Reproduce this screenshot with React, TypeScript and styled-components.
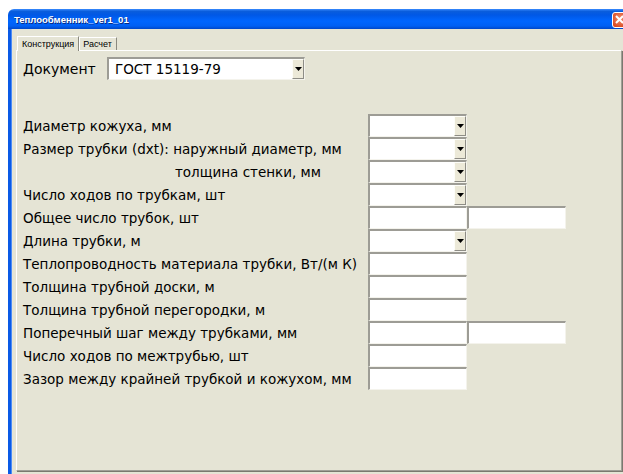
import React from "react";
import styled, { createGlobalStyle } from "styled-components";

const GlobalStyle = createGlobalStyle`
  html, body {
    margin: 0;
    padding: 0;
    background: #ffffff;
    overflow: hidden;
  }
  body {
    width: 623px;
    height: 474px;
  }
`;

type Field = {
  label: string;
  indent?: number;
  kind: "combo" | "text" | "pair";
};

const fields: Field[] = [
  { label: "Диаметр кожуха, мм", kind: "combo" },
  { label: "Размер трубки (dxt): наружный диаметр, мм", kind: "combo" },
  { label: "толщина стенки, мм", indent: 152, kind: "combo" },
  { label: "Число ходов по трубкам, шт", kind: "combo" },
  { label: "Общее число трубок, шт", kind: "pair" },
  { label: "Длина трубки, м", kind: "combo" },
  { label: "Теплопроводность материала трубки, Вт/(м К)", kind: "text" },
  { label: "Толщина трубной доски, м", kind: "text" },
  { label: "Толщина трубной перегородки, м", kind: "text" },
  { label: "Поперечный шаг между трубками, мм", kind: "pair" },
  { label: "Число ходов по межтрубью, шт", kind: "text" },
  { label: "Зазор между крайней трубкой и кожухом, мм", kind: "text" },
];

const Arrow = () => (
  <svg width="7" height="4" viewBox="0 0 7 4">
    <path d="M0 0h7L3.5 4z" fill="#000" />
  </svg>
);

const Combo: React.FC<{ value?: string; wide?: boolean }> = ({ value, wide }) => (
  <ComboBox wide={wide}>
    <ComboText>{value}</ComboText>
    <DropButton>
      <Arrow />
    </DropButton>
  </ComboBox>
);

const App: React.FC = () => {
  return (
    <>
      <GlobalStyle />
      <Window>
        <TitleBar>
          <Title>Теплообменник_ver1_01</Title>
          <CloseButton>
            <svg width="9" height="9" viewBox="0 0 9 9">
              <path d="M1 1l7 7M8 1L1 8" stroke="#fff" strokeWidth="2" />
            </svg>
          </CloseButton>
        </TitleBar>
        <Body>
          <Tabs>
            <Tab active>Конструкция</Tab>
            <Tab>Расчет</Tab>
          </Tabs>
          <Panel>
            <DocRow>
              <DocLabel>Документ</DocLabel>
              <Combo value="ГОСТ 15119-79" wide />
            </DocRow>
            <Form>
              {fields.map((f) => (
                <React.Fragment key={f.label}>
                  <Label indent={f.indent}>{f.label}</Label>
                  {f.kind === "combo" ? <Combo /> : <TextBox />}
                  {f.kind === "pair" ? <TextBox /> : <span />}
                </React.Fragment>
              ))}
            </Form>
          </Panel>
        </Body>
      </Window>
    </>
  );
};

const Window = styled.div`
  margin: 9px 0 0 8px;
  width: 640px;
  display: flex;
  flex-direction: column;
`;

const TitleBar = styled.div`
  height: 20px;
  display: flex;
  align-items: center;
  padding-left: 6px;
  border-radius: 6px 6px 0 0;
  background: linear-gradient(
    to bottom,
    #3a8cff 0%,
    #0a5ddc 12%,
    #0058e6 30%,
    #0066ff 60%,
    #0060f4 85%,
    #0047c8 100%
  );
`;

const Title = styled.span`
  font-family: "Liberation Sans", Arial, sans-serif;
  font-weight: bold;
  font-size: 9.5px;
  color: #ffffff;
  text-shadow: 1px 1px 0 #0a2a80;
  flex: 1;
`;

const CloseButton = styled.div`
  width: 20px;
  height: 16px;
  margin-right: 16px;
  margin-top: 1px;
  border: 1px solid #ffffff;
  border-radius: 3px;
  background: radial-gradient(circle at 40% 40%, #f09070, #d8461e 70%);
  display: flex;
  align-items: center;
  justify-content: center;
  box-sizing: border-box;
  padding-right: 6px;
`;

const Body = styled.div`
  background: #e5e4d5;
  border-left: 3px solid #0a5ae6;
  box-shadow: inset 1px 0 0 #4d8cf5;
  padding: 6px 0 0 5px;
  height: 450px;
  box-sizing: border-box;
`;

const Tabs = styled.div`
  display: flex;
  align-items: flex-end;
  height: 15px;
  padding-left: 1px;
`;

const Tab = styled.div<{ active?: boolean }>`
  font-family: "Liberation Sans", Arial, sans-serif;
  font-size: 9px;
  color: #000;
  height: ${({ active }) => (active ? "15px" : "13px")};
  line-height: ${({ active }) => (active ? "15px" : "13px")};
  padding: 0 4px 0 ${({ active }) => (active ? "4px" : "3px")};
  border-left: 1px solid #ffffff;
  border-top: 1px solid #ffffff;
  border-right: 1px solid #8a897f;
  background: #e5e4d5;
  box-sizing: border-box;
  position: relative;
  top: ${({ active }) => (active ? "1px" : "0")};
`;

const Panel = styled.div`
  width: 606px;
  height: 421px;
  box-sizing: border-box;
  border-left: 1px solid #ffffff;
  border-top: 1px solid #ffffff;
  border-right: 1px solid #a09f97;
  border-bottom: 1px solid #a09f97;
  box-shadow: 1px 1px 0 #7a796f;
  padding: 6px 0 0 6px;
`;

const DocRow = styled.div`
  display: flex;
  align-items: center;
  height: 23px;
`;

const DocLabel = styled.span`
  font-family: "DejaVu Sans", Verdana, sans-serif;
  font-size: 14px;
  color: #000;
  width: 84px;
`;

const Form = styled.div`
  margin-top: 34px;
  display: grid;
  grid-template-columns: 345px 99px 99px;
  grid-auto-rows: 23px;
  align-items: center;
`;

const Label = styled.span<{ indent?: number }>`
  font-family: "DejaVu Sans", Verdana, sans-serif;
  font-size: 13.5px;
  color: #000;
  white-space: nowrap;
  padding-left: ${({ indent }) => indent ?? 0}px;
`;

const Sunken = styled.div`
  height: 23px;
  box-sizing: border-box;
  background: #ffffff;
  border-top: 2px solid #9d9c95;
  border-left: 2px solid #9d9c95;
  border-right: 1px solid #f4f3ec;
  border-bottom: 1px solid #f4f3ec;
`;

const TextBox = styled(Sunken)`
  width: 99px;
`;

const ComboBox = styled(Sunken)<{ wide?: boolean }>`
  width: ${({ wide }) => (wide ? "198px" : "99px")};
  display: flex;
  align-items: stretch;
`;

const ComboText = styled.div`
  flex: 1;
  font-family: "DejaVu Sans", Verdana, sans-serif;
  font-size: 13.5px;
  line-height: 20px;
  padding-left: 6px;
  color: #000;
  white-space: nowrap;
`;

const DropButton = styled.div`
  width: 12px;
  background: #ece9d8;
  border-left: 1px solid #fdfdf8;
  border-top: 1px solid #fdfdf8;
  border-right: 1px solid #8e8d86;
  border-bottom: 1px solid #8e8d86;
  display: flex;
  align-items: center;
  justify-content: center;
  box-sizing: border-box;
`;

export default App;
